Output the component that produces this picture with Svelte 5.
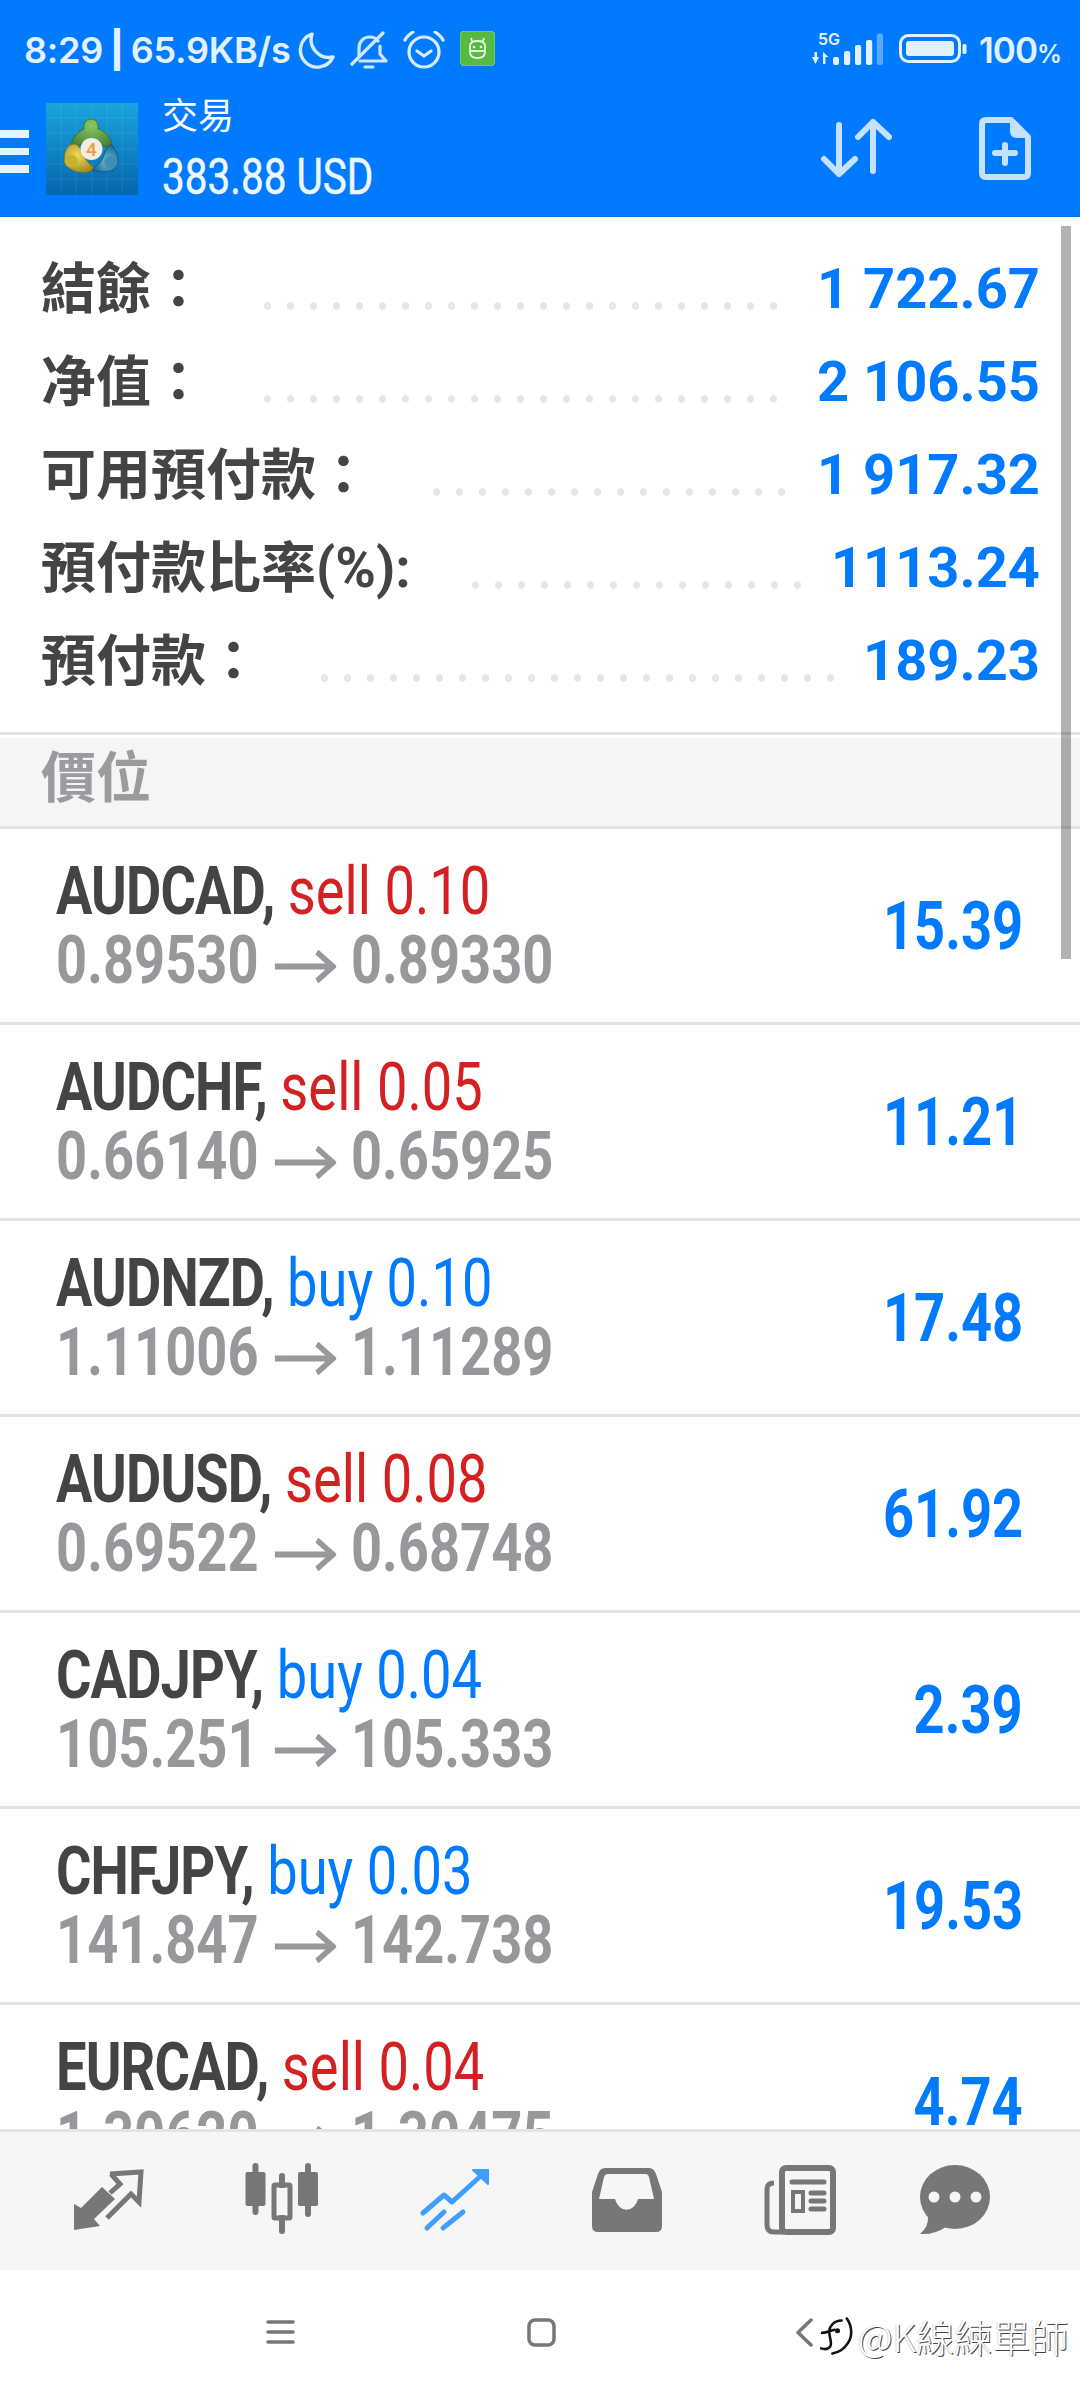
<script>
  const summary = [
    { label: '結餘：', value: '1 722.67', dots: 50, end: 38 },
    { label: '净值：', value: '2 106.55', dots: 50, end: 38 },
    { label: '可用預付款：', value: '1 917.32', dots: 54, end: 20 },
    { label: '預付款比率(%):', value: '1113.24', dots: 53, end: 20 },
    { label: '預付款：', value: '189.23', dots: 52, end: 20 }
  ];

  const positions = [
    { symbol: 'AUDCAD', side: 'sell', lot: '0.10', open: '0.89530', close: '0.89330', profit: '15.39' },
    { symbol: 'AUDCHF', side: 'sell', lot: '0.05', open: '0.66140', close: '0.65925', profit: '11.21' },
    { symbol: 'AUDNZD', side: 'buy', lot: '0.10', open: '1.11006', close: '1.11289', profit: '17.48' },
    { symbol: 'AUDUSD', side: 'sell', lot: '0.08', open: '0.69522', close: '0.68748', profit: '61.92' },
    { symbol: 'CADJPY', side: 'buy', lot: '0.04', open: '105.251', close: '105.333', profit: '2.39' },
    { symbol: 'CHFJPY', side: 'buy', lot: '0.03', open: '141.847', close: '142.738', profit: '19.53' },
    { symbol: 'EURCAD', side: 'sell', lot: '0.04', open: '1.30620', close: '1.30475', profit: '4.74' }
  ];
</script>

<div class="screen">
  <header class="top">
    <div class="status">
      <span class="clock">8:29 <b>|</b> 65.9KB/s</span>
      <svg class="moon" width="38" height="38" viewBox="0 0 38 38" fill="none" stroke="#d9ecff" stroke-width="3.4" stroke-linejoin="round"><path d="M14 3 A17 17 0 1 0 35 26 A18 18 0 0 1 14 3Z" /></svg>
      <svg class="bell" width="38" height="38" viewBox="0 0 38 38" fill="none" stroke="#cfe6ff" stroke-width="3.2" stroke-linecap="round" stroke-linejoin="round"><path d="M9 24 V17 C9 10 14 6 20 6 C23 6 26 7 28 10 M30 15 V23 L36 30 H10" /><path d="M2 33 L33 2" /><path d="M15 36 H23" /></svg>
      <svg class="alarm" width="42" height="38" viewBox="0 0 42 38" fill="none" stroke="#d9ecff" stroke-width="3.2" stroke-linecap="round" stroke-linejoin="round"><circle cx="21" cy="21" r="15" /><path d="M14 20 L21 25 L28 20" /><path d="M2 9 C4 5 7 3 10 1 M40 9 C38 5 35 3 32 1" /></svg>
      <svg class="robot" width="35" height="35" viewBox="0 0 35 35"><path d="M3 0 H32 L35 3 V32 L32 35 H3 L0 32 V3Z" fill="#55b942" stroke="#8fd884" stroke-width="1" /><path d="M10 15 C10 11 13 10 17.500 10 C22 10 25 11 25 15 V21 C25 25 22 27 17.500 27 C13 27 10 25 10 21Z M10 20 H25 M12 10 L11 7 M23 10 L24 7" fill="none" stroke="#e6f7df" stroke-width="1.800" /><circle cx="14" cy="16" r="1.300" fill="#e6f7df" /><circle cx="21" cy="16" r="1.300" fill="#e6f7df" /></svg>

      <svg class="signal" width="71" height="34" viewBox="0 0 71 34" fill="#e3f1ff">
        <text x="6" y="14" font-family="Inter" font-weight="600" font-size="16">5G</text>
        <path d="M0 26 H2.500 V21 H5 V26 H7 L3.500 33Z M11 33 V21 L16.500 26 H13.500 V33Z" />
        <rect x="21" y="26" width="6" height="8" rx="2" />
        <rect x="32" y="20" width="6.200" height="14" rx="2" />
        <rect x="43" y="14" width="6.200" height="20" rx="2" />
        <rect x="54" y="9" width="6.200" height="25" rx="2" />
        <rect x="64.800" y="2.500" width="6.200" height="31.500" rx="2" fill="#5aa8ff" />
      </svg>
      <svg class="battery" width="68" height="29" viewBox="0 0 68 29">
        <rect x="1.500" y="1.500" width="59" height="26" rx="8" fill="none" stroke="#e3f1ff" stroke-width="3" />
        <rect x="7" y="7" width="48" height="15" rx="3" fill="#e3f1ff" />
        <rect x="63.500" y="10" width="4" height="10" rx="1.500" fill="#e3f1ff" />
      </svg>
      <span class="percent">100<small>%</small></span>
    </div>

    <div class="toolbar">
      <div class="burger"><i></i><i></i><i></i></div>
      <svg class="logo" width="92" height="92" viewBox="0 0 92 92">
        <defs>
          <linearGradient id="sky" x1="0" y1="0" x2="0" y2="1"><stop offset="0" stop-color="#1aa4dd" /><stop offset="1" stop-color="#0566ae" /></linearGradient>
          <radialGradient id="green" cx=".5" cy=".2" r=".8"><stop offset="0" stop-color="#8cc665" /><stop offset="1" stop-color="#37752c" /></radialGradient>
          <radialGradient id="gold" cx=".4" cy=".4" r=".7"><stop offset="0" stop-color="#eddc5e" /><stop offset="1" stop-color="#97831a" /></radialGradient>
          <radialGradient id="teal" cx=".6" cy=".6" r=".7"><stop offset="0" stop-color="#6cc0dc" /><stop offset="1" stop-color="#0f5a88" /></radialGradient>
        </defs>
        <rect width="92" height="92" fill="url(#sky)" />
        <path d="M15 0 V92 M30 0 V92 M46 0 V92 M61 0 V92 M76 0 V92 M0 15 H92 M0 30 H92 M0 46 H92 M0 61 H92 M0 76 H92" stroke="#ffffff" stroke-opacity=".08" stroke-width="1" />
        <path d="M45 16 C50 16 53 20 52 26 C60 28 66 36 67 46 L55 42 C50 38 40 38 34 42 L24 50 C24 38 30 29 38 26 C37 20 40 16 45 16Z" fill="url(#green)" stroke="#2f6a2a" stroke-width=".8" />
        <path d="M24 42 C32 38 34 46 38 52 C40 58 44 62 50 66 C40 72 26 70 20 62 C17 56 18 46 24 42Z" fill="url(#gold)" stroke="#7d6e16" stroke-width=".8" />
        <circle cx="25" cy="58" r="6.500" fill="#c9b12f" />
        <path d="M66 42 C72 50 74 58 70 64 C66 70 54 70 46 67 C52 62 56 58 58 52 C60 46 62 42 66 42Z" fill="url(#teal)" stroke="#0e4f78" stroke-width=".8" />
        <circle cx="65" cy="59" r="6.500" fill="#3f8fb5" />
        <circle cx="45.500" cy="46" r="11" fill="#f2ede4" />
        <text x="45.500" y="53" text-anchor="middle" font-family="Roboto" font-size="19" font-weight="500" fill="#ef9a3c">4</text>
      </svg>
      <div class="account">
        <div class="title">交易</div>
        <div class="balance"><span class="narrow">383.88 USD</span></div>
      </div>
      <svg class="swap" width="71" height="60" viewBox="0 0 71 60" fill="none" stroke="#c6e0ff" stroke-width="6" stroke-linecap="round" stroke-linejoin="round"><path d="M18 7 V56 M3 41 L18 56 L34 41" /><path d="M52 53 V4 M37 19 L52 4 L68 19" /></svg>
      <svg class="newdoc" width="52" height="63" viewBox="0 0 52 63"><path d="M7 3 H32 L49 20 V56 Q49 60 45 60 H7 Q3 60 3 56 V7 Q3 3 7 3Z" fill="none" stroke="#c6e0ff" stroke-width="6" stroke-linejoin="round" /><path d="M32 3 L49 20 H38 Q32 20 32 14Z" fill="#c6e0ff" stroke="#c6e0ff" stroke-width="2" stroke-linejoin="round" /><path d="M26 28 V46 M16 36 H36" stroke="#c6e0ff" stroke-width="6" stroke-linecap="round" /></svg>
    </div>
  </header>

  <main class="content">
    <div class="thumb"></div>
    <section class="summary">
      {#each summary as item (item.label)}
        <div class="line">
          <span class="label">{item.label}</span>
          <span class="dots" style="margin: 0 {item.end}px 0 {item.dots}px"></span>
          <span class="amount">{item.value}</span>
        </div>
      {/each}
    </section>
    <div class="section">價位</div>
    {#each positions as pos (pos.symbol)}
      <div class="row">
        <div class="deal">
          <div class="narrow first"><b>{pos.symbol},</b> <span class={pos.side}>{pos.side} {pos.lot}</span></div>
          <div class="narrow second">
            {pos.open}<svg class="arrow" width="76" height="33" viewBox="0 0 76 33" fill="none" stroke="#97989c" stroke-width="6"><path d="M0 16.500 H72 M52 2 L72 16.500 L52 31" /></svg>{pos.close}
          </div>
        </div>
        <div class="narrow profit">{pos.profit}</div>
      </div>
    {/each}
  </main>

  <nav class="tabs">
    <svg width="70" height="62" viewBox="0 0 70 62" fill="#777"><path d="M0 61 L0 35 L7 39 L28 18 L41 30 L20 50 L26 57Z" /><path d="M36 5 L67 3 L65 33 L57 25 L33 49 M37 5 L46 15 L36 24" fill="none" stroke="#777" stroke-width="5" /></svg>
    <svg class="candles" width="73" height="72" viewBox="0 0 73 72" fill="#777"><rect x="0.500" y="9" width="20" height="34" rx="2" /><rect x="7.500" y="0" width="6" height="52" rx="3" /><rect x="29" y="22" width="16" height="33" rx="1" fill="none" stroke="#777" stroke-width="5" /><rect x="34" y="10" width="6" height="61" rx="3" /><rect x="34" y="25" width="6" height="27" fill="#f6f6f6" /><rect x="53" y="9" width="20" height="34" rx="2" /><rect x="60" y="0" width="6" height="54" rx="3" /></svg>
    <svg width="70" height="64" viewBox="0 0 70 64" fill="none" stroke="#3f9fff" stroke-width="5" stroke-linecap="round" stroke-linejoin="round"><path d="M3 45 L24 27 L32 34 L64 5" /><path d="M53 2 H68 V16Z" fill="#3f9fff" stroke-width="2" /><path d="M7 60 L24 44 M23 60 L43 44" /></svg>
    <svg width="70" height="64" viewBox="0 0 70 64"><path fill="#777" fill-rule="evenodd" d="M13 0 H57 Q62 0 64 6 L70 24 V58 Q70 64 64 64 H6 Q0 64 0 58 V24 L6 6 Q8 0 13 0Z M16 6 H54 Q56 6 57 9 L62 31 H46 A12 15 0 0 1 23 31 H7 L12 9 Q13 6 16 6Z" /></svg>
    <svg width="72" height="70" viewBox="0 0 72 70" fill="none" stroke="#777"><path d="M10 18 Q3 18 3 24 V60 Q3 67 10 67 H20" stroke-width="5" /><rect x="18" y="3" width="51" height="64" rx="4" stroke-width="6" /><path d="M28 17 H60 M47 28 H60 M47 36 H60 M47 44 H60" stroke-width="5" stroke-linecap="round" /><rect x="29" y="27" width="10" height="19" stroke-width="4" /></svg>
    <svg class="chat" width="70" height="70" viewBox="0 0 70 70" fill="#777"><ellipse cx="35" cy="32" rx="35" ry="32" /><path d="M8 50 Q9 62 0 69 Q14 70 26 62Z" /><g fill="#f6f6f6"><circle cx="14" cy="32" r="5.500" /><circle cx="35" cy="32" r="5.500" /><circle cx="56" cy="32" r="5.500" /></g></svg>
  </nav>

  <footer class="system">
    <svg class="sys-menu" width="29" height="24" viewBox="0 0 29 24" stroke="#777" stroke-width="3.500" stroke-linecap="round"><path d="M2 2 H27 M2 12 H27 M2 22 H27" /></svg>
    <svg class="sys-home" width="29" height="29" viewBox="0 0 29 29" fill="none" stroke="#777" stroke-width="3.500"><rect x="2" y="2" width="25" height="25" rx="6" /></svg>
    <svg class="sys-back" width="17" height="29" viewBox="0 0 17 29" fill="none" stroke="#777" stroke-width="3.500" stroke-linecap="round" stroke-linejoin="round"><path d="M15 2 L2 14.500 L15 27" /></svg>
    <div class="mark">
      <svg width="34" height="38" viewBox="0 0 33 36" fill="none" stroke="#111" stroke-width="2.500" stroke-linecap="round"><path d="M21 3 C14 3 9 8 9 14 C9 20 12 24 10 28 C8 31 4 31 1 30 M2 15 C6 15 10 13 14 12 M26 1 C31 8 32 18 27 25 C24 30 18 34 12 35" /><circle cx="17" cy="13" r="1.200" fill="#111" /></svg>
      <span>@K線練單師</span>
    </div>
  </footer>
</div>

<style>
  :global(body) {
    margin: 0;
    background: #fff;
  }

  .screen {
    width: 1080px;
    height: 2400px;
    display: flex;
    flex-direction: column;
    font-family: Roboto, "Noto Sans CJK TC", sans-serif;
    overflow: hidden;
  }

  .top {
    height: 217px;
    flex: none;
    background: #007bff;
    box-sizing: border-box;
    border-bottom: 1px solid #0a6fd6;
  }

  .status {
    height: 92px;
    padding: 31px 0 0 24px;
    box-sizing: border-box;
    display: flex;
    align-items: flex-start;
    color: #e3f1ff;
  }

  .clock {
    font: 600 36px/38px Inter, sans-serif;
    letter-spacing: -0.2px;
    word-spacing: -2px;
    width: 274px;
    white-space: nowrap;
  }

  .clock b {
    font-weight: 800;
  }

  .bell { margin-left: 14px; }
  .alarm { margin-left: 15px; }
  .robot { margin-left: 15px; }
  .signal { margin-left: 317px; }
  .battery { margin: 3px 0 0 16px; }

  .percent {
    margin-left: 12px;
    font: 600 35px/38px Inter, sans-serif;
    letter-spacing: -1px;
  }

  .percent small {
    font-size: 25px;
  }

  .toolbar {
    height: 124px;
    display: flex;
    align-items: flex-start;
    color: #fff;
  }

  .burger {
    width: 29px;
    margin: 38px 0 0;
    display: flex;
    flex-direction: column;
    gap: 10px;
  }

  .burger i {
    height: 7.500px;
    background: #e6f3ff;
  }

  .logo {
    margin: 11px 0 0 17px;
  }

  .account {
    margin-left: 24px;
    width: 300px;
  }

  .title {
    font: 400 36px/42px "Noto Sans CJK TC", sans-serif;
  }

  .balance {
    font: 400 50px/58px Roboto, sans-serif;
    -webkit-text-stroke: 0.5px #eef7ff;
    margin-top: 14px;
    color: #eef7ff;
  }

  .narrow {
    display: inline-block;
    transform: scaleX(0.81);
    transform-origin: left center;
    white-space: nowrap;
  }

  .swap {
    margin: 26px 0 0 359px;
  }

  .newdoc {
    margin: 25px 0 0 87px;
  }

  .content {
    position: relative;
    flex: 1;
    min-height: 0;
    overflow: hidden;
  }

  .thumb {
    position: absolute;
    top: 9px;
    right: 9px;
    width: 10px;
    height: 733px;
    background: rgba(0, 0, 0, 0.3);
  }

  .summary {
    padding: 24px 40px 26px 41px;
  }

  .line {
    height: 93px;
    display: flex;
    align-items: center;
  }

  .label {
    font: 700 55px/97px Roboto, "Noto Sans CJK TC", sans-serif;
    color: #444;
    white-space: nowrap;
    align-self: flex-start;
  }

  .dots {
    flex: 1;
    align-self: stretch;
    background: radial-gradient(circle at center, #e6e6e6 3.500px, transparent 4px) left 0 bottom 24px / 23px 8px repeat-x;
  }

  .amount {
    font: 700 56px/93px Roboto, sans-serif;
    padding-top: 3px;
    color: #007aff;
    white-space: nowrap;
  }

  .section {
    height: 91px;
    border-top: 3px solid #e4e4e4;
    border-bottom: 3px solid #e4e4e4;
    background: linear-gradient(#fff 3px, #f5f5f5 3px);
    padding-left: 41px;
    font: 700 55px/76px "Noto Sans CJK TC", sans-serif;
    color: #9a9b9f;
  }

  .row {
    height: 193px;
    border-bottom: 3px solid #e4e4e4;
    padding: 0 57px 0 56px;
    display: flex;
    justify-content: space-between;
  }

  .deal {
    display: flex;
    flex-direction: column;
    padding-top: 28px;
  }

  .first {
    font: 400 67px/68px Roboto, sans-serif;
    color: #444;
  }

  .first b {
    font-weight: 700;
    letter-spacing: -1.100px;
  }

  .sell { color: #d42020; }
  .buy { color: #007aff; }

  .second {
    font: 700 67px/68px Roboto, sans-serif;
    color: #97989c;
    margin-top: 1px;
  }

  .arrow {
    margin: 0 18px 0 20px;
  }

  .profit {
    font: 700 67px/68px Roboto, sans-serif;
    color: #007aff;
    margin-top: 63px;
    transform-origin: right center;
  }

  .tabs {
    height: 141px;
    flex: none;
    box-sizing: border-box;
    border-top: 3px solid #e4e4e4;
    background: #f6f6f6;
    display: flex;
    align-items: center;
    padding: 0 0 2px 74px;
    gap: 102px;
  }

  .candles {
    margin: 0 0 3px -1px;
  }

  .chat {
    margin-left: -18px;
  }

  .system {
    height: 130px;
    flex: none;
    background: #fff;
    position: relative;
    display: flex;
    align-items: flex-start;
  }

  .sys-menu { margin: 50px 0 0 266px; }
  .sys-home { margin: 48px 0 0 232px; }
  .sys-back { margin: 48px 0 0 240px; }

  .mark {
    position: absolute;
    left: 820px;
    top: 44px;
    display: flex;
    align-items: center;
    font: 300 38px/44px "Noto Sans CJK TC", sans-serif;
    color: #fff;
    text-shadow: 1px 1px 0 #444, -1px 0 0 #ddd;
    white-space: nowrap;
  }

  .mark span {
    margin-left: 4px;
  }
</style>
